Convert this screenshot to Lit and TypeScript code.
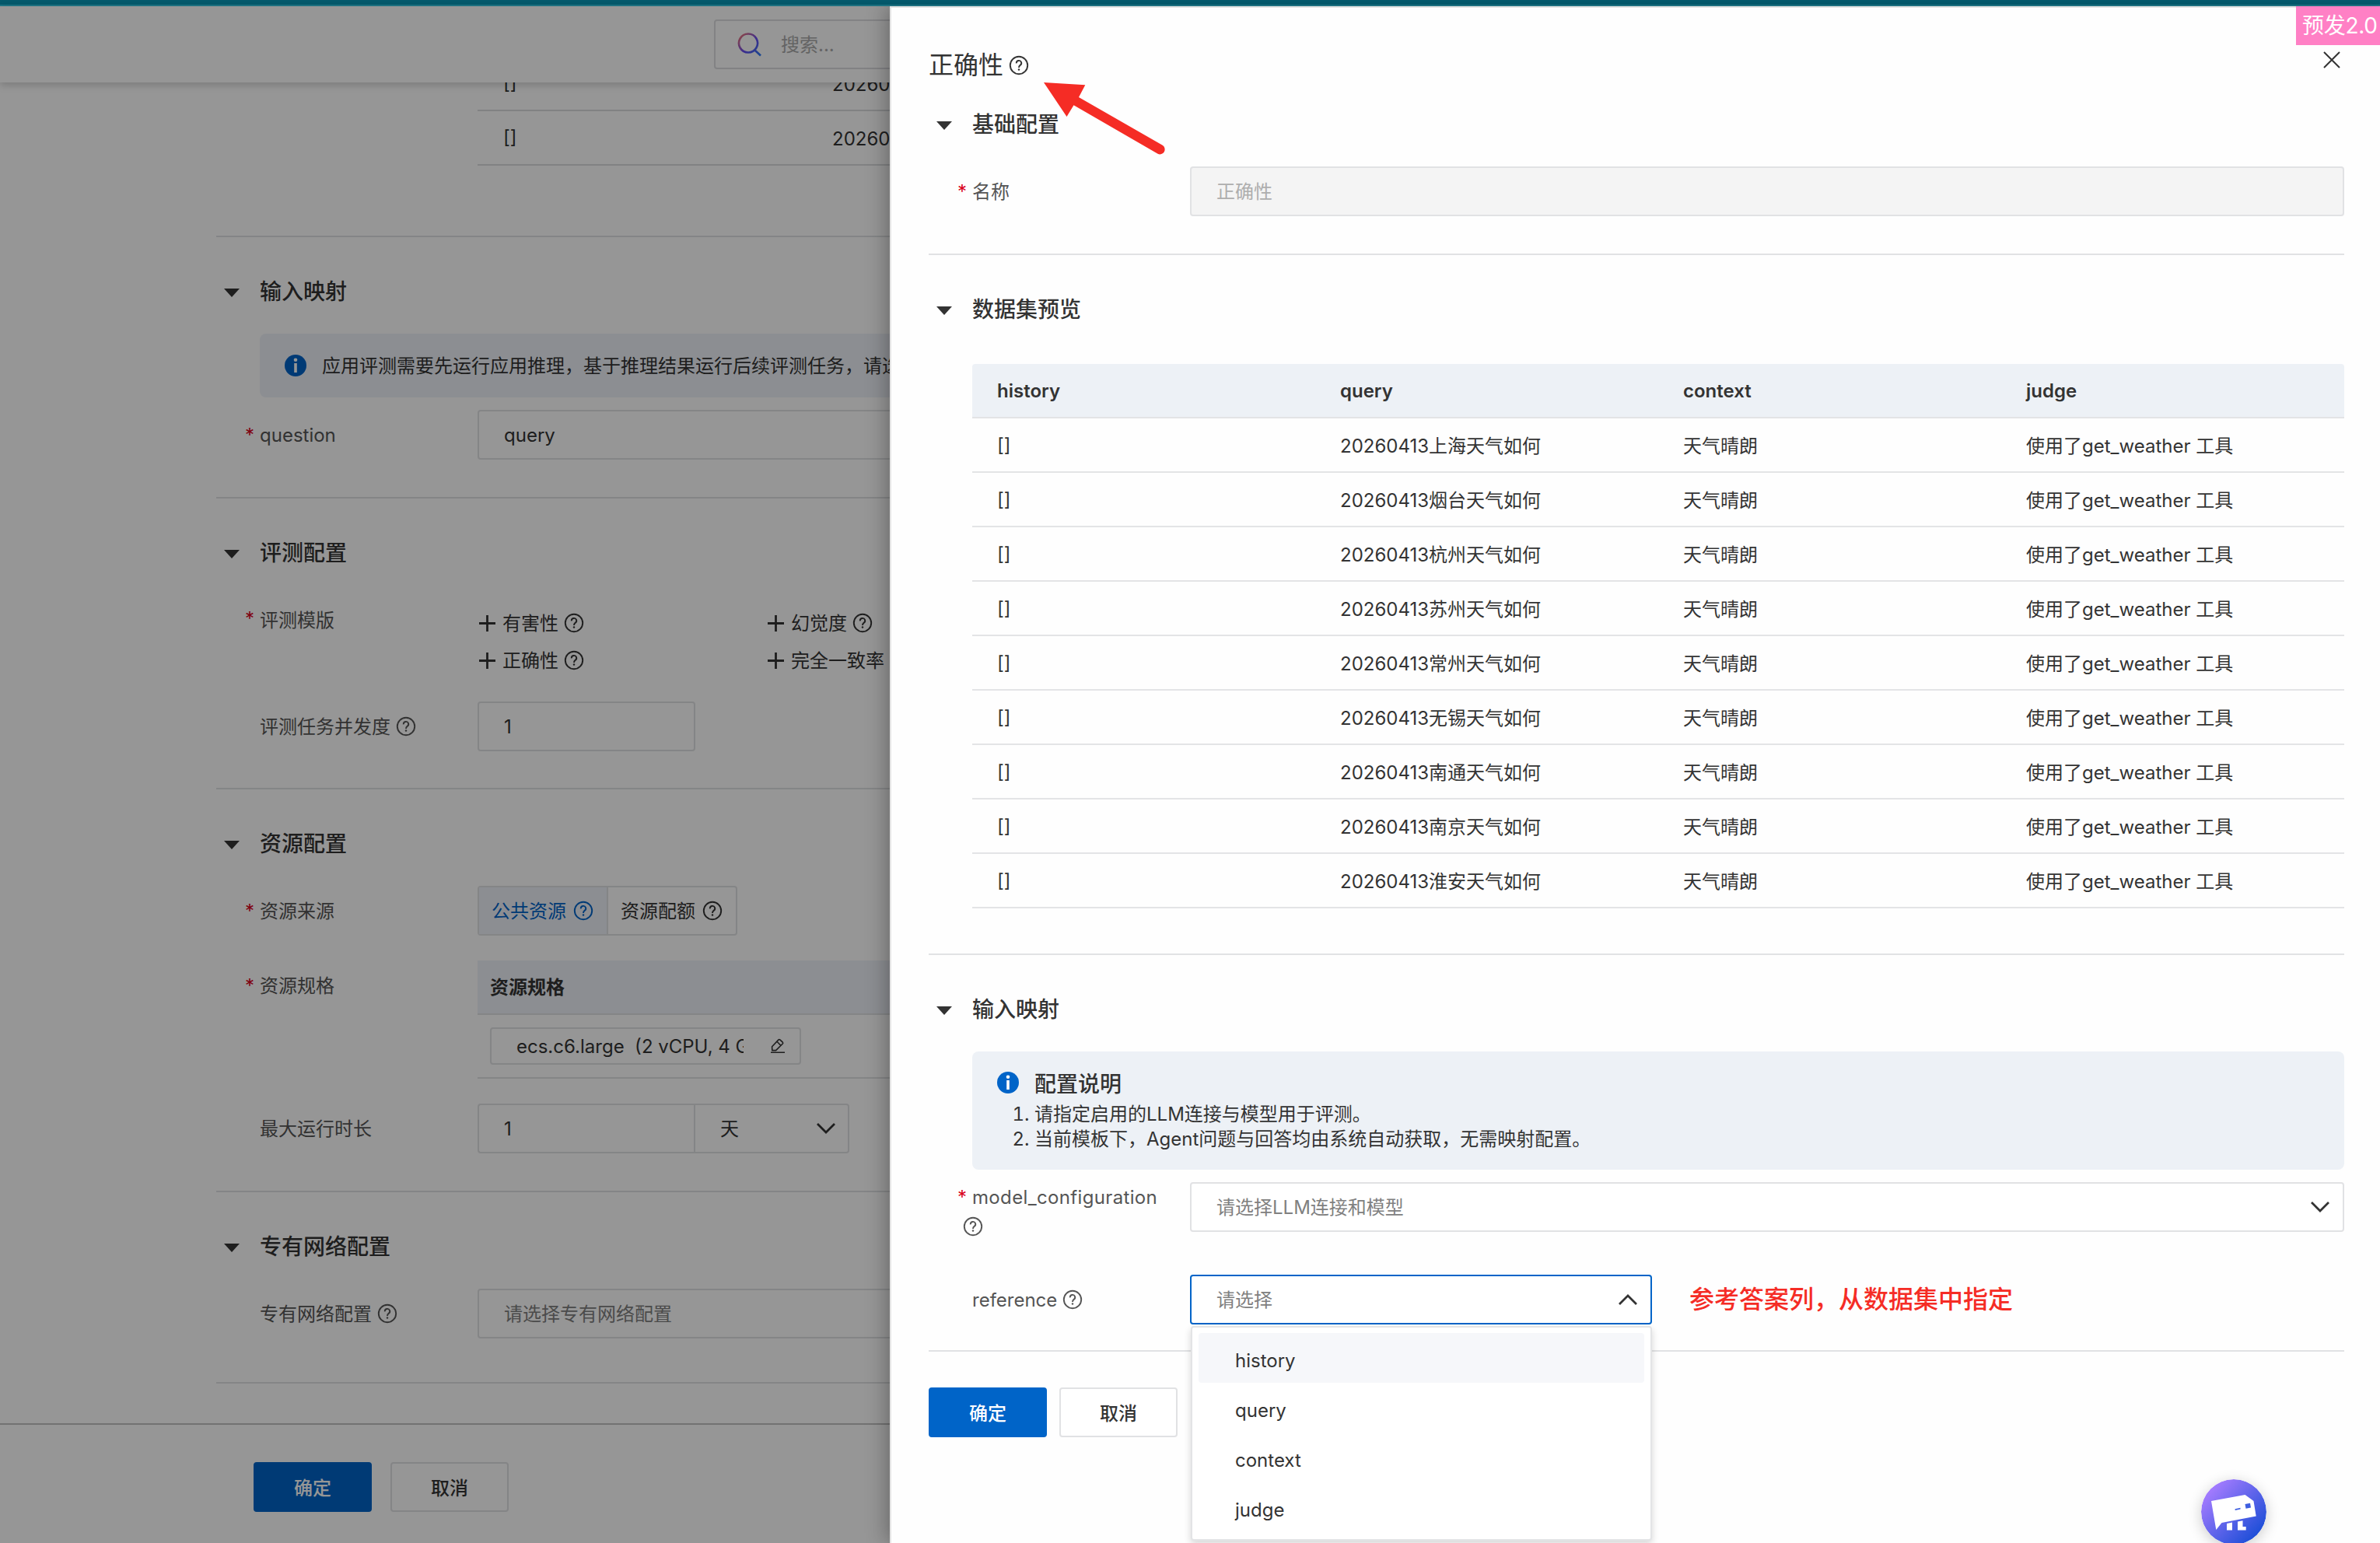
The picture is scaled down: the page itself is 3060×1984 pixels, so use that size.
import { LitElement, html, svg, css, nothing } from "lit";
import { customElement, property } from "lit/decorators.js";

const CITIES = ["上海", "烟台", "杭州", "苏州", "常州", "无锡", "南通", "南京", "淮安"];
const COLUMNS = ["history", "query", "context", "judge"];

const helpIcon = html`<svg class="help" viewBox="0 0 26 26" fill="none" stroke="currentColor" stroke-width="1.9">
  <circle cx="13" cy="13" r="11.2"></circle>
  <path d="M9.8 10.4 A3.2 3.2 0 1 1 14.6 12.9 Q13 14 13 15.9"></path>
  <circle cx="13" cy="18.5" r="1.2" fill="currentColor" stroke="none"></circle>
</svg>`;

const infoIcon = html`<svg class="info-icon" viewBox="0 0 28 28">
  <circle cx="14" cy="14" r="14" fill="#0064c8"></circle>
  <circle cx="14" cy="6.8" r="2.3" fill="#fff"></circle>
  <rect x="12.2" y="11" width="3.6" height="12" fill="#fff"></rect>
</svg>`;

const chevron = (up: boolean) => html`<svg class="chevron" viewBox="0 0 24 14" fill="none" stroke="currentColor" stroke-width="2.8">
  <path d=${up ? "M1 13 L12 2 L23 13" : "M1 1 L12 12 L23 1"}></path>
</svg>`;

const plusIcon = html`<svg class="plus" viewBox="0 0 21 21" stroke="currentColor" stroke-width="2.8">
  <path d="M0 10.5 H21 M10.5 0 V21"></path>
</svg>`;

const shared = css`
  :host, * { box-sizing: border-box; }
  svg { display: block; flex: none; }
  .section { border-bottom: 2px solid #e1e2e4; padding-top: 50px; }
  .head { display: flex; align-items: center; height: 40px; padding-left: 10px; font-size: 28px; font-weight: 500; line-height: 40px; }
  .tri { width: 20px; height: 11px; margin-right: 26px; margin-top: 3px; }
  .row { display: flex; align-items: flex-start; }
  .label { width: 336px; flex: none; height: 64px; padding-left: 37px; display: flex; align-items: center; color: #555; }
  .star { width: 19px; color: #d9001b; line-height: 20px; padding-top: 2px; }
  .help { width: 26px; height: 26px; margin-left: 7px; }
  .control { height: 64px; border: 2px solid #e1e2e4; border-radius: 4px; background: #fff; padding-left: 32px; display: flex; align-items: center; color: #333; }
  .grow { flex: 1; }
  .cjk { padding-bottom: 3px; }
  .control.hint { color: #808080; }
  .chevron { width: 24px; height: 14px; color: #333; }
  .info-icon { width: 28px; height: 28px; }
  .button { width: 152px; height: 64px; border-radius: 4px; display: flex; align-items: center; justify-content: center; font-weight: 500; border: 2px solid #e1e2e4; background: #fff; padding-bottom: 1px; }
  .primary { background: #0064c8; border-color: #0064c8; color: #fff; }
`;

const head = (text: string) => html`<div class="head">
  <svg class="tri" viewBox="0 0 20 11"><path d="M0 0H20L10 11Z" fill="currentColor"></path></svg>${text}
</div>`;

const star = (on: boolean) => html`<span class="star">${on ? "*" : nothing}</span>`;

@customElement("task-form")
class TaskForm extends LitElement {
  static styles = [shared, css`
    :host { display: flex; flex-direction: column; height: 1976px; background: #fff; }
    .header { height: 98px; flex: none; position: relative; z-index: 1; background: #fff; box-shadow: 0 3px 10px rgba(0, 0, 0, 0.2); padding: 17px 0 0 918px; }
    .search { width: 700px; height: 64px; border: 2px solid #dddee0; border-radius: 4px; display: flex; align-items: center; padding-left: 28px; color: #aaa; }
    .search svg { width: 32px; height: 32px; margin-right: 24px; }
    .content { flex: 1; min-height: 0; overflow: hidden; padding-left: 278px; }
    .preview { height: 199px; padding: 0 0 0 336px; display: flow-root; }
    .preview-rows { margin-top: -33px; }
    .preview-row { height: 70px; border-bottom: 2px solid #dcdddf; display: grid; grid-template-columns: 423px 1fr; align-items: center; padding-left: 33px; }
    .preview-row span { padding-bottom: 2px; }
    .mapping { height: 336px; }
    .notice { margin: 34px 0 16px 56px; height: 82px; border-radius: 8px; background: #eff2f8; display: flex; align-items: center; padding-left: 32px; gap: 20px; white-space: nowrap; }
    .evaluation { height: 374px; }
    .templates { margin-top: 46px; }
    .short { height: 36px; }
    .options { display: grid; grid-template-columns: 371px 371px; grid-auto-rows: 48px; }
    .option { display: flex; align-items: center; padding-left: 2px; }
    .option span { margin-top: -3px; }
    .plus { width: 21px; height: 21px; margin-right: 9px; }
    .concurrency { margin-top: 29px; }
    .number { width: 280px; }
    .resource { height: 518px; }
    .gap-34 { margin-top: 34px; }
    .gap-32 { margin-top: 32px; }
    .segment { height: 64px; display: flex; border: 2px solid #e1e2e4; border-radius: 4px; }
    .choice { width: 164px; padding-left: 16px; display: flex; align-items: center; }
    .choice .help { margin-left: 9px; }
    .active { color: #0064c8; background: #eff2f8; border-right: 2px solid #e1e2e4; width: 166px; }
    .spec-label { margin-top: 14px; }
    .spec-table { flex: 1; }
    .spec-head { height: 70px; background: #eff2f8; border-bottom: 2px solid #e1e2e4; padding-left: 16px; font-weight: 600; line-height: 70px; }
    .spec-row { height: 82px; border-bottom: 2px solid #e1e2e4; padding: 16px 0 0 16px; }
    .spec { width: 400px; height: 48px; border: 2px solid #e1e2e4; border-radius: 4px; display: flex; align-items: center; padding-left: 32px; }
    .spec-text { width: 292px; overflow: hidden; white-space: pre; line-height: 40px; padding-top: 1px; }
    .spec svg { width: 20px; height: 20px; margin-left: 34px; }
    .number.joined { border-radius: 4px 0 0 4px; border-right: 0; width: 278px; }
    .unit { width: 200px; border-radius: 0 4px 4px 0; padding-right: 16px; padding-left: 32px; }
    .network { height: 246px; }
    .footer { flex: none; height: 154px; border-top: 2px solid #c2c2c2; display: flex; gap: 24px; padding: 48px 0 0 326px; }
  `];

  option(name: string) {
    return html`<div class="option">${plusIcon}<span>${name}</span>${helpIcon}</div>`;
  }

  render() {
    return html`
      <div class="header">
        <div class="search">
          <svg viewBox="0 0 32 32" fill="none" stroke="url(#lens)" stroke-width="2.6">
            <defs><linearGradient id="lens" x1="0" y1="0" x2="1" y2="1">
              <stop offset="0" stop-color="#ff7a6b"></stop><stop offset="0.5" stop-color="#6a4cf0"></stop><stop offset="1" stop-color="#2a7bf5"></stop>
            </linearGradient></defs>
            <path d="M14 2.5a12 12 0 1 0 .01 0ZM22.5 23.5L30 30.5"></path>
          </svg><span class="cjk">搜索...</span>
        </div>
      </div>
      <div class="content">
        <div class="section preview"><div class="preview-rows">
          ${["20260413南京天气如何", "20260413淮安天气如何"].map((q) => html`<div class="preview-row"><span>[]</span><span>${q}</span></div>`)}
        </div></div>
        <div class="section mapping">
          ${head("输入映射")}
          <div class="notice">${infoIcon}<span class="cjk">应用评测需要先运行应用推理，基于推理结果运行后续评测任务，请选择</span></div>
          <div class="row"><div class="label">${star(true)}question</div><div class="control grow">query</div></div>
        </div>
        <div class="section evaluation">
          ${head("评测配置")}
          <div class="row templates">
            <div class="label short">${star(true)}评测模版</div>
            <div class="options">${["有害性", "幻觉度", "正确性", "完全一致率"].map((n) => this.option(n))}</div>
          </div>
          <div class="row concurrency"><div class="label">${star(false)}<span class="cjk">评测任务并发度</span>${helpIcon}</div><div class="control number">1</div></div>
        </div>
        <div class="section resource">
          ${head("资源配置")}
          <div class="row gap-34">
            <div class="label">${star(true)}<span class="cjk">资源来源</span></div>
            <div class="segment"><div class="choice active"><span class="cjk">公共资源</span>${helpIcon}</div><div class="choice"><span class="cjk">资源配额</span>${helpIcon}</div></div>
          </div>
          <div class="row gap-32">
            <div class="label short spec-label">${star(true)}<span class="cjk">资源规格</span></div>
            <div class="spec-table">
              <div class="spec-head">资源规格</div>
              <div class="spec-row"><div class="spec">
                <span class="spec-text">ecs.c6.large  (2 vCPU, 4 GiB)</span>
                <svg viewBox="0 0 20 20" fill="none" stroke="currentColor" stroke-width="1.6" stroke-linejoin="round">
                  <path d="M1 18.3H19M2.8 15.6L2.6 10.8L11 1.9Q11.9 1 12.8 1.9L16.3 5.2Q17.1 6.1 16.3 7L7.6 15.6ZM9 4.2L13.8 9.2"></path>
                </svg>
              </div></div>
            </div>
          </div>
          <div class="row gap-32">
            <div class="label">${star(false)}<span class="cjk">最大运行时长</span></div>
            <div class="control number joined">1</div>
            <div class="control unit"><span class="grow cjk">天</span>${chevron(false)}</div>
          </div>
        </div>
        <div class="section network">
          ${head("专有网络配置")}
          <div class="row gap-34"><div class="label">${star(false)}<span class="cjk">专有网络配置</span>${helpIcon}</div><div class="control grow hint"><span class="cjk">请选择专有网络配置</span></div></div>
        </div>
      </div>
      <div class="footer"><div class="button primary">确定</div><div class="button">取消</div></div>
    `;
  }
}

@customElement("dataset-table")
class DatasetTable extends LitElement {
  @property({ attribute: false }) cities: string[] = [];
  static styles = css`
    :host { display: block; margin: 50px 0 58px 56px; }
    .tr { height: 70px; box-sizing: border-box; border-bottom: 2px solid #e3e4e6; display: grid; grid-template-columns: repeat(4, 441px); align-items: center; }
    .tr span { padding-left: 32px; }
    .text { padding-bottom: 2px; }
    .th { background: #edf1f6; border-radius: 4px 4px 0 0; font-weight: 600; }
  `;
  render() {
    return html`
      <div class="tr th">${COLUMNS.map((c) => html`<span>${c}</span>`)}</div>
      ${this.cities.map((c) => html`<div class="tr">
        <span>[]</span><span class="text">20260413${c}天气如何</span><span class="text">天气晴朗</span><span class="text">使用了get_weather 工具</span>
      </div>`)}`;
  }
}

@customElement("evaluator-drawer")
class EvaluatorDrawer extends LitElement {
  static styles = [shared, css`
    :host { display: block; background: #fefefe; border: solid #e4e4e4; border-width: 2px 0 0 2px; padding: 48px 46px 0 48px; box-shadow: -3px 0 26px rgba(0, 0, 0, 0.32); }
    .title { height: 48px; display: flex; align-items: center; font-size: 32px; }
    .title .help { margin: 4px 0 0 7px; }
    .basic { padding-top: 34px; }
    .basic .row { margin: 34px 0 48px; }
    .disabled { background: #f4f4f4; color: #aeaeae; }
    .notice { margin: 34px 0 16px 56px; height: 152px; border-radius: 8px; background: #edf1f6; padding: 24px 32px; }
    .notice-title { display: flex; align-items: center; gap: 20px; height: 32px; font-size: 28px; font-weight: 500; margin-bottom: 9px; }
    .notice ol { margin: 0; padding-left: 48px; line-height: 32px; }
    .stacked { height: 76px; flex-direction: column; align-items: flex-start; }
    .label-line { display: flex; align-items: center; height: 38px; letter-spacing: 0.35px; }
    .stacked .help { margin-top: 6px; }
    .reference { margin: 43px 0 33px; }
    .model .control { padding-right: 17px; }
    .picker { width: 594px; position: relative; z-index: 1; border-color: #0064c8; padding-right: 17px; }
    .menu { position: absolute; top: 64px; left: -1px; width: 593px; height: 276px; background: #fff; border: 2px solid #e3e4e6; border-radius: 4px; box-shadow: 0 4px 10px rgba(0, 0, 0, 0.16); padding: 7px 8px 0; color: #333; }
    .item { height: 64px; line-height: 72px; padding-left: 47px; border-radius: 4px; }
    .item:first-child { background: #f6f7fa; }
    .remark { color: #f52c25; font-size: 32px; margin-left: 48px; line-height: 64px; font-weight: 500; }
    .buttons { display: flex; gap: 16px; padding-top: 46px; }
  `];

  render() {
    return html`
      <div class="title"><span class="cjk">正确性</span>${helpIcon}</div>
      <div class="section basic">
        ${head("基础配置")}
        <div class="row"><div class="label">${star(true)}<span class="cjk">名称</span></div><div class="control grow disabled"><span class="cjk">正确性</span></div></div>
      </div>
      <div class="section">${head("数据集预览")}<dataset-table .cities=${CITIES}></dataset-table></div>
      <div class="section">
        ${head("输入映射")}
        <div class="notice">
          <div class="notice-title">${infoIcon}<span>配置说明</span></div>
          <ol><li>请指定启用的LLM连接与模型用于评测。</li><li>当前模板下，Agent问题与回答均由系统自动获取，无需映射配置。</li></ol>
        </div>
        <div class="row model">
          <div class="label stacked"><div class="label-line">${star(true)}model_configuration</div>${helpIcon}</div>
          <div class="control grow hint"><span class="grow cjk">请选择LLM连接和模型</span>${chevron(false)}</div>
        </div>
        <div class="row reference">
          <div class="label">${star(false)}reference${helpIcon}</div>
          <div class="control picker hint">
            <span class="grow cjk">请选择</span>${chevron(true)}
            <div class="menu">${COLUMNS.map((c) => html`<div class="item">${c}</div>`)}</div>
          </div>
          <div class="remark">参考答案列，从数据集中指定</div>
        </div>
      </div>
      <div class="buttons"><div class="button primary">确定</div><div class="button">取消</div></div>
    `;
  }
}

@customElement("app-root")
class AppRoot extends LitElement {
  static styles = css`
    :host { display: block; position: relative; width: 3060px; height: 1984px; overflow: hidden; color: #333; font: 24px Inter, "Noto Sans CJK SC", sans-serif; }
    .bar { height: 8px; background: #04596c; border-bottom: 2px solid #1f7686; box-sizing: border-box; }
    .page { position: relative; z-index: 0; }
    .mask { position: absolute; z-index: 1; inset: 8px 0 0 0; background: rgba(0, 0, 0, 0.41); }
    .drawer { position: absolute; z-index: 2; top: 8px; right: 0; bottom: 0; width: 1916px; clip-path: inset(0 0 0 -60px); }
    .badge, .close, .arrow, .assistant { position: absolute; z-index: 3; }
    .badge { top: 8px; right: 0; width: 108px; height: 50px; background: #ff80c5; color: #fff; font-size: 28px; line-height: 50px; padding-left: 8px; box-sizing: border-box; white-space: nowrap; letter-spacing: -0.3px; }
    .close { left: 2987px; top: 66px; width: 22px; height: 22px; }
    .arrow { left: 1340px; top: 100px; width: 170px; height: 110px; }
    .assistant { left: 2830px; top: 1902px; width: 84px; height: 84px; border-radius: 50%; box-shadow: 0 4px 18px rgba(0, 0, 0, 0.2); }
  `;

  render() {
    return html`
      <div class="bar"></div>
      <task-form class="page"></task-form>
      <div class="mask"></div>
      <evaluator-drawer class="drawer"></evaluator-drawer>
      <div class="badge">预发2.0</div>
      <svg class="close" viewBox="0 0 22 22" stroke="#333" stroke-width="2"><path d="M1 1L21 21M21 1L1 21"></path></svg>
      <svg class="arrow" viewBox="1340 100 170 110" fill="#f52c25">
        <path d="M1342 106L1395.3 109.3L1387 125L1494.7 186.8A6.3 6.3 0 0 1 1488.6 197.8L1380.5 135.3L1371.5 150Z"></path>
      </svg>
      <svg class="assistant" viewBox="0 0 84 84">
        <defs><linearGradient id="glow" x1="0.12" y1="0.15" x2="0.85" y2="0.85">
          <stop offset="0" stop-color="#a67cff"></stop><stop offset="1" stop-color="#1f4fd8"></stop>
        </linearGradient></defs>
        <circle cx="42" cy="42" r="42" fill="url(#glow)"></circle>
        ${svg`<path fill="#fff" d="M13 28L56.5 20L67.5 28L70.7 47.5L26.5 56L19.3 65ZM33 57L40 55.5V65.5H33ZM47 54.5L53.5 53.2V61H57.7V65.5H47Z"></path>
        <path fill="#3f5fe0" d="M56.5 32L63 30.8L64 36.5L57.5 37.7ZM43.5 38.2L50.5 36.8V38.6L43.8 40.1Z"></path>`}
      </svg>
    `;
  }
}
